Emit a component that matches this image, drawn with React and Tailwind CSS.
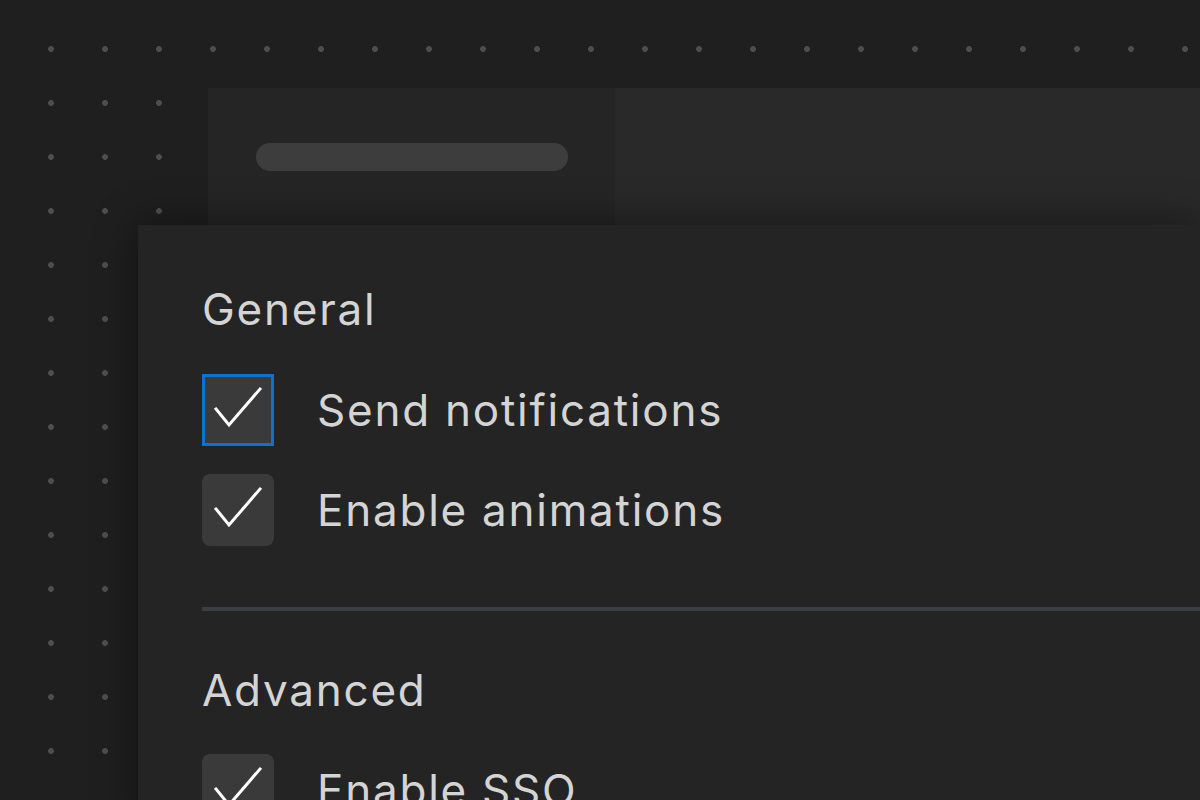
import React from "react";

const Check = () => (
  <svg width="72" height="72" viewBox="0 0 72 72" fill="none" className="block">
    <path d="M14 35 L27 51 L58 15" stroke="#ffffff" strokeWidth="3" strokeLinecap="square" strokeLinejoin="miter" />
  </svg>
);

const CheckRow = ({ label, focused }) => (
  <div className="flex items-center gap-[43px] h-[72px]">
    {focused ? (
      <div className="w-[72px] h-[72px] shrink-0 bg-[#3a3a3a] border-[3px] border-[#0b73cf] flex items-center justify-center">
        <div className="-m-[3px]">
          <Check />
        </div>
      </div>
    ) : (
      <div className="w-[72px] h-[72px] shrink-0 bg-[#3a3a3a] rounded-[8px]">
        <Check />
      </div>
    )}
    <span className="text-[44px] leading-[72px] tracking-[0.04em] text-[#d4d4d4] whitespace-nowrap">{label}</span>
  </div>
);

const Heading = ({ children }) => (
  <h2 className="text-[44px] leading-[44px] tracking-[0.04em] text-[#d4d4d4] font-normal">{children}</h2>
);

export default function App() {
  return (
    <div
      className="w-[1200px] h-[800px] overflow-hidden flex flex-col bg-[#1f1f1f] bg-[radial-gradient(circle,#4e4e4e_2.6px,transparent_3.2px)] bg-size-[54px_54px] bg-position-[24px_22px]"
      style={{ fontFamily: "Inter, 'Noto Sans', sans-serif" }}
    >
      {/* back window */}
      <div className="ml-[208px] mt-[88px] h-[137px] shrink-0 flex">
        <div className="w-[407px] bg-[#252525] pl-[48px] pt-[55px]">
          <div className="w-[312px] h-[28px] rounded-full bg-[#3d3d3d]" />
        </div>
        <div className="flex-1 bg-[#292929]" />
      </div>

      {/* settings panel */}
      <div className="relative z-10 ml-[138px] flex-1 bg-[#242424] shadow-[0_0_40px_rgba(0,0,0,0.45)] pl-[64px] pt-[62px]">
        <Heading>General</Heading>
        <div className="mt-[43px] flex flex-col gap-[28px]">
          <CheckRow label="Send notifications" focused />
          <CheckRow label="Enable animations" />
        </div>
        <div className="mt-[61px] h-[4px] bg-[#3a3d42]" />
        <div className="mt-[57px]">
          <Heading>Advanced</Heading>
        </div>
        <div className="mt-[42px] flex flex-col gap-[28px]">
          <CheckRow label="Enable SSO" />
        </div>
      </div>
    </div>
  );
}
